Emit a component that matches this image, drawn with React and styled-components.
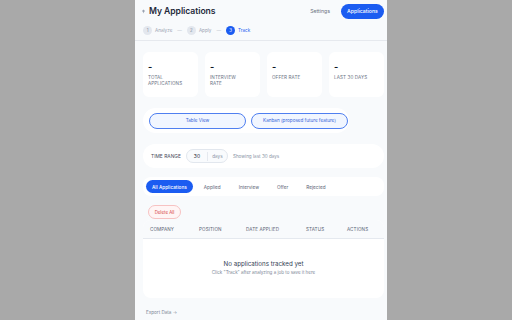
import React from "react";
import styled, { createGlobalStyle } from "styled-components";

const Global = createGlobalStyle`
  html, body { margin: 0; padding: 0; }
  body {
    background: #a9a9a9;
    font-family: Inter, "Noto Sans", "Liberation Sans", sans-serif;
    -webkit-font-smoothing: antialiased;
  }
  * { box-sizing: border-box; }
`;

const Page = styled.div`
  width: 512px;
  height: 320px;
  padding-left: 135px;
  overflow: hidden;
`;

const Panel = styled.div`
  width: 252px;
  height: 320px;
  background: #f8fafc;
  display: flex;
  flex-direction: column;
  overflow: hidden;
`;

const TopBar = styled.header`
  padding: 0 3px 5px 6px;
  border-bottom: 1px solid #e6e9ee;
  background: #f8fafc;
`;

const HeaderRow = styled.div`
  height: 22px;
  display: flex;
  align-items: center;
  justify-content: space-between;
`;

const Title = styled.h1`
  margin: 0;
  display: flex;
  align-items: center;
  gap: 3px;
  font-size: 8.6px;
  font-weight: 600;
  color: #1e293b;
  letter-spacing: -0.05px;
`;

const Nav = styled.nav`
  display: flex;
  align-items: center;
  gap: 11px;
`;

const NavLink = styled.span`
  font-size: 5.2px;
  color: #6b7280;
`;

const PrimaryPill = styled.span`
  height: 15px;
  width: 43px;
  border-radius: 8px;
  background: #1b5cf1;
  color: #fff;
  font-size: 5.2px;
  font-weight: 500;
  display: flex;
  align-items: center;
  justify-content: center;
`;

const Steps = styled.div`
  margin-top: 3px;
  margin-left: 2px;
  height: 10px;
  display: flex;
  align-items: center;
  gap: 5px;
`;

const Step = styled.div`
  display: flex;
  align-items: center;
  gap: 3px;
  font-size: 4.6px;
  color: ${(p) => (p.$active ? "#1b5cf1" : "#9aa3b2")};
`;

const StepDot = styled.span`
  width: 9px;
  height: 9px;
  border-radius: 50%;
  background: ${(p) => (p.$active ? "#1b5cf1" : "#e3e7ee")};
  color: ${(p) => (p.$active ? "#fff" : "#8a94a6")};
  font-size: 4.3px;
  display: flex;
  align-items: center;
  justify-content: center;
`;

const Dash = styled.span`
  font-size: 4.6px;
  color: #b4bbc7;
`;

const Content = styled.main`
  padding: 11px 3px 0 8px;
  display: flex;
  flex-direction: column;
`;

const StatGrid = styled.div`
  display: grid;
  grid-template-columns: repeat(4, 55px);
  gap: 7px;
`;

const StatCard = styled.div`
  height: 45px;
  background: #fff;
  border-radius: 6px;
  padding: 10px 5px 0 5px;
  display: flex;
  flex-direction: column;
`;

const StatValue = styled.div`
  font-size: 9px;
  font-weight: 700;
  line-height: 10px;
  color: #111827;
`;

const StatLabel = styled.div`
  margin-top: 3px;
  font-size: 4.6px;
  line-height: 6px;
  letter-spacing: 0.1px;
  color: #6b7385;
  text-transform: uppercase;
`;

const ToggleBar = styled.div`
  margin-top: 11px;
  width: 206px;
  height: 25px;
  border-radius: 13px;
  background: #fff;
  display: flex;
  align-items: center;
  gap: 5px;
  padding-left: 6px;
`;

const ToggleButton = styled.button`
  width: 97px;
  height: 16px;
  border-radius: 8px;
  border: 1px solid #4f7ff0;
  background: #f1f6ff;
  color: #3563d8;
  font-family: inherit;
  font-size: 4.6px;
  padding: 0;
`;

const TimeCard = styled.div`
  margin-top: 11px;
  height: 24px;
  border-radius: 12px;
  background: #fff;
  display: flex;
  align-items: center;
  padding-left: 8px;
  gap: 5px;
`;

const FieldLabel = styled.span`
  font-size: 4.8px;
  color: #3f4756;
  letter-spacing: 0.05px;
`;

const DaysInput = styled.div`
  width: 42px;
  height: 14px;
  border-radius: 7px;
  border: 1px solid #e2e7ee;
  background: #f9fbfd;
  display: flex;
  align-items: center;
`;

const DaysValue = styled.span`
  width: 21px;
  text-align: center;
  font-size: 5px;
  color: #1f2937;
  border-right: 1px solid #e5e9ef;
  line-height: 9px;
`;

const DaysUnit = styled.span`
  flex: 1;
  text-align: center;
  font-size: 4.6px;
  color: #8a94a6;
`;

const Hint = styled.span`
  font-size: 4.6px;
  color: #8a94a6;
`;

const TabsCard = styled.div`
  margin-top: 9px;
  height: 19px;
  border-radius: 8px;
  background: #fff;
  display: flex;
  align-items: center;
  padding-left: 3px;
`;

const Tab = styled.span`
  height: 13px;
  padding: ${(p) => (p.$active ? "0 6px" : "0 9px")};
  border-radius: 7px;
  display: flex;
  align-items: center;
  font-size: 4.7px;
  font-weight: ${(p) => (p.$active ? 500 : 400)};
  background: ${(p) => (p.$active ? "#1b5cf1" : "transparent")};
  color: ${(p) => (p.$active ? "#fff" : "#5b6475")};
  margin-right: ${(p) => (p.$active ? "2px" : "0")};
`;

const DangerButton = styled.button`
  margin-top: 9px;
  margin-left: 5px;
  align-self: flex-start;
  width: 33px;
  height: 14px;
  border-radius: 7px;
  border: 1px solid #f7c2c2;
  background: #fff5f5;
  color: #d64545;
  font-family: inherit;
  font-size: 4.4px;
  padding: 0;
`;

const TableCard = styled.div`
  margin-top: 1px;
  height: 78px;
  border-radius: 8px;
  background: #fff;
  overflow: hidden;
  display: flex;
  flex-direction: column;
`;

const TableHead = styled.div`
  height: 19px;
  background: #f8fafc;
  border-bottom: 1px solid #e5e9ef;
  display: grid;
  grid-template-columns: 49px 47px 60px 41px 1fr;
  align-items: center;
  padding-left: 7px;
`;

const HeadCell = styled.span`
  font-size: 4.6px;
  color: #5b6475;
  letter-spacing: 0.1px;
`;

const Empty = styled.div`
  flex: 1;
  display: flex;
  flex-direction: column;
  align-items: center;
  padding-top: 21px;
  gap: 3px;
`;

const EmptyTitle = styled.div`
  font-size: 6.2px;
  color: #334155;
`;

const EmptyText = styled.div`
  font-size: 4.5px;
  color: #7b8596;
`;

const FooterLink = styled.span`
  margin-top: 12px;
  margin-left: 3px;
  font-size: 4.6px;
  color: #7b8596;
`;

const stats = [
  { label: ["Total", "Applications"] },
  { label: ["Interview", "Rate"] },
  { label: ["Offer Rate"] },
  { label: ["Last 30 Days"] },
];

const tabs = ["All Applications", "Applied", "Interview", "Offer", "Rejected"];
const cols = ["COMPANY", "POSITION", "DATE APPLIED", "STATUS", "ACTIONS"];

export default function App() {
  return (
    <>
      <Global />
      <Page>
        <Panel>
          <TopBar>
            <HeaderRow>
              <Title>
                <svg width="5" height="5" viewBox="0 0 10 10">
                  <path d="M5 1 L8 4 L6 6 L5 9 L4 6 L2 4 Z" fill="#9aa3b2" />
                </svg>
                My Applications
              </Title>
              <Nav>
                <NavLink>Settings</NavLink>
                <PrimaryPill>Applications</PrimaryPill>
              </Nav>
            </HeaderRow>
            <Steps>
              <Step>
                <StepDot>1</StepDot>Analyze
              </Step>
              <Dash>—</Dash>
              <Step>
                <StepDot>2</StepDot>Apply
              </Step>
              <Dash>—</Dash>
              <Step $active>
                <StepDot $active>3</StepDot>Track
              </Step>
            </Steps>
          </TopBar>
          <Content>
            <StatGrid>
              {stats.map((s, i) => (
                <StatCard key={i}>
                  <StatValue>-</StatValue>
                  <StatLabel>
                    {s.label.map((l, j) => (
                      <div key={j}>{l}</div>
                    ))}
                  </StatLabel>
                </StatCard>
              ))}
            </StatGrid>
            <ToggleBar>
              <ToggleButton>Table View</ToggleButton>
              <ToggleButton>Kanban (proposed future feature)</ToggleButton>
            </ToggleBar>
            <TimeCard>
              <FieldLabel>TIME RANGE</FieldLabel>
              <DaysInput>
                <DaysValue>30</DaysValue>
                <DaysUnit>days</DaysUnit>
              </DaysInput>
              <Hint>Showing last 30 days</Hint>
            </TimeCard>
            <TabsCard>
              {tabs.map((t, i) => (
                <Tab key={t} $active={i === 0}>
                  {t}
                </Tab>
              ))}
            </TabsCard>
            <DangerButton>Delete All</DangerButton>
            <TableCard>
              <TableHead>
                {cols.map((c) => (
                  <HeadCell key={c}>{c}</HeadCell>
                ))}
              </TableHead>
              <Empty>
                <EmptyTitle>No applications tracked yet</EmptyTitle>
                <EmptyText>Click "Track" after analyzing a job to save it here</EmptyText>
              </Empty>
            </TableCard>
            <FooterLink>Export Data →</FooterLink>
          </Content>
        </Panel>
      </Page>
    </>
  );
}
